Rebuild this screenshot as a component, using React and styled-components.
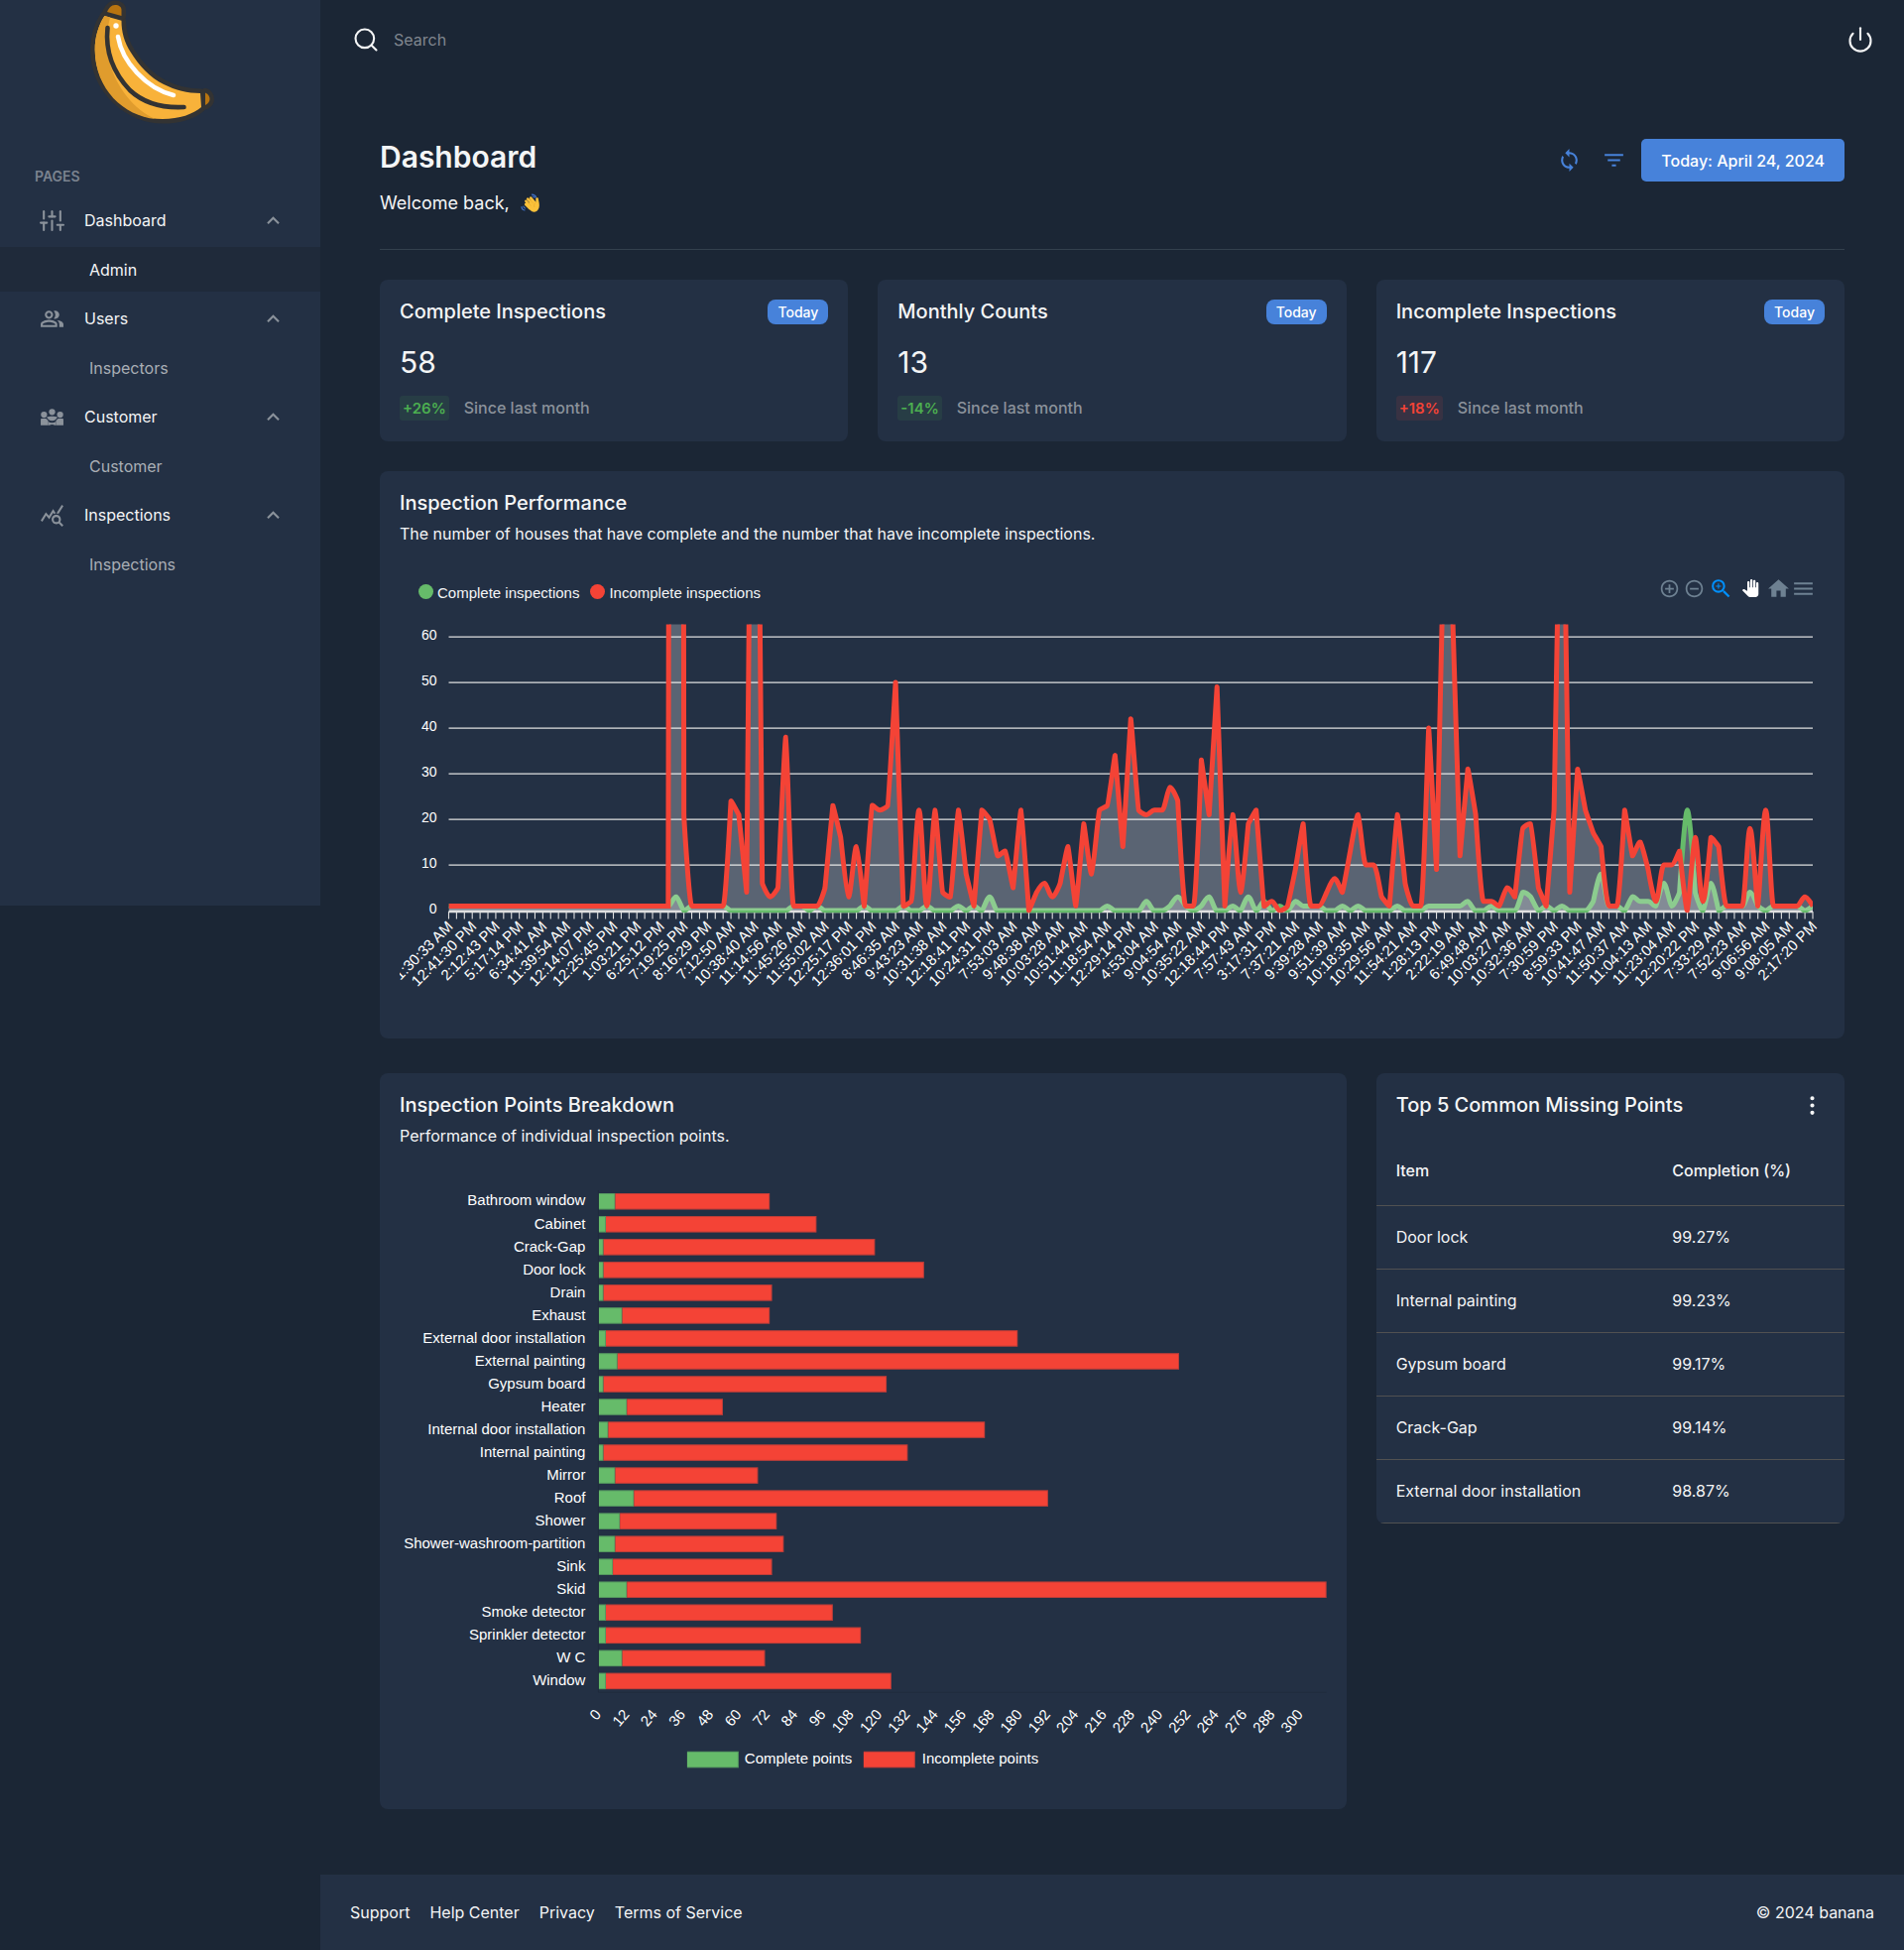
import React from "react";
import styled, { createGlobalStyle, css } from "styled-components";
import { FiSearch, FiPower, FiSliders, FiMoreVertical } from "react-icons/fi";
import {
  MdOutlinePeopleAlt,
  MdQueryStats,
  MdExpandLess,
  MdSync,
  MdFilterList,
  MdAddCircleOutline,
  MdRemoveCircleOutline,
  MdZoomIn,
  MdPanTool,
  MdHome,
  MdMenu,
} from "react-icons/md";

const color = {
  page: "#1b2635",
  paper: "#233044",
  active: "#1f2a3a",
  text: "#f4f5f6",
  muted: "#8b929b",
  blue: "#4782da",
  green: "#66bb6a",
  red: "#f44336",
  line: "#515151",
};

const GlobalStyle = createGlobalStyle`
  *, *::before, *::after { box-sizing: border-box; }
  body {
    margin: 0;
    background: ${color.page};
    color: ${color.text};
    font-family: Inter, "Liberation Sans", sans-serif;
    font-size: 16px;
    line-height: 24px;
  }
  h1, h2, p, ul { margin: 0; padding: 0; }
  ul { list-style: none; }
  button, input { font: inherit; color: inherit; }
  a { color: inherit; text-decoration: none; }
`;

/* ---------- shell ---------- */

const Page = styled.div`
  display: flex;
  align-items: flex-start;
  min-height: 100vh;
`;

const Sidebar = styled.aside`
  flex: 0 0 323px;
  min-height: 913px;
  background: ${color.paper};
`;

const Brand = styled.a`
  display: flex;
  justify-content: center;
  height: 160px;
  padding-right: 15px;
`;

const Section = styled.h2`
  padding: 6px 35px 5px;
  color: #7b838f;
  font-size: 14px;
  font-weight: 600;
`;

const NavToggle = styled.button`
  display: flex;
  align-items: center;
  gap: 20px;
  width: 100%;
  height: 54px;
  padding: 0 35px 0 40px;
  border: 0;
  background: none;
  text-align: left;
  cursor: pointer;

  span {
    flex: 1;
  }
  svg {
    color: ${color.muted};
  }
`;

const NavLink = styled.a`
  display: flex;
  align-items: center;
  height: 45px;
  padding-left: 90px;
  color: #a9aeb5;
  ${(p) =>
    p.$active &&
    css`
      background: ${color.active};
      color: ${color.text};
    `}
`;

const Column = styled.div`
  display: flex;
  flex: 1;
  flex-direction: column;
  min-width: 0;
  min-height: 100vh;
`;

const TopBar = styled.header`
  display: flex;
  align-items: center;
  justify-content: space-between;
  height: 80px;
  padding: 0 30px;
`;

const SearchBox = styled.label`
  display: flex;
  align-items: center;
  gap: 14px;
  padding-left: 2px;

  input {
    width: 200px;
    padding: 0;
    border: 0;
    outline: 0;
    background: none;
  }
  input::placeholder {
    color: #80868f;
    opacity: 1;
  }
`;

const IconButton = styled.button`
  display: inline-flex;
  align-items: center;
  justify-content: center;
  width: ${(p) => p.$width || 45}px;
  height: ${(p) => p.$height || 45}px;
  padding: 0;
  border: 0;
  background: none;
  color: ${(p) => p.$color || color.text};
  cursor: pointer;
`;

const Main = styled.main`
  flex: 1;
  padding: 60px 60px 66px;
`;

const Footer = styled.footer`
  display: flex;
  align-items: center;
  justify-content: space-between;
  height: 76px;
  padding: 0 30px;
  background: ${color.paper};

  ul {
    display: flex;
    gap: 20px;
  }
`;

/* ---------- page heading ---------- */

const Heading = styled.div`
  display: flex;
  align-items: flex-start;
  justify-content: space-between;
  padding-bottom: 34px;
  border-bottom: 1px solid #33404d;
`;

const PageTitle = styled.h1`
  font-size: 30px;
  font-weight: 600;
  line-height: 36px;
`;

const Welcome = styled.p`
  display: flex;
  align-items: center;
  gap: 11px;
  margin-top: 17px;
  font-size: 18px;
`;

const Actions = styled.div`
  display: flex;
  align-items: center;
  height: 43px;
`;

const DateButton = styled.button`
  height: 43px;
  margin-left: 5px;
  padding: 0 20px;
  border: 0;
  border-radius: 5px;
  background: ${color.blue};
  color: #fff;
  font-weight: 500;
  cursor: pointer;
`;

/* ---------- cards ---------- */

const Grid = styled.div`
  display: grid;
  grid-template-columns: repeat(3, minmax(0, 1fr));
  gap: 30px;
  align-items: start;
  margin-top: ${(p) => p.$top}px;
`;

const Card = styled.section`
  padding: ${(p) => p.$padding || "20px"};
  border-radius: 8px;
  background: ${color.paper};
  overflow: hidden;
  grid-column: span ${(p) => p.$span || 1};
`;

const CardHead = styled.div`
  display: flex;
  align-items: flex-start;
  justify-content: space-between;
  height: 25px;
  ${(p) => p.$inset && "padding: 0 20px;"}
`;

const CardTitle = styled.h2`
  font-size: 20px;
  font-weight: 500;
  line-height: 24px;
`;

const CardText = styled.p`
  margin-top: 7px;
`;

const Pill = styled.span`
  padding: 0 10px;
  border-radius: 8px;
  background: ${color.blue};
  color: #fff;
  font-size: 14px;
  font-weight: 500;
  line-height: 25px;
`;

const Value = styled.p`
  margin: 20px 0 16px;
  font-size: 30px;
  line-height: 36px;
`;

const Trend = styled.p`
  display: flex;
  align-items: center;
  gap: 15px;
  color: ${color.muted};
  font-weight: 500;
  line-height: 25px;

  b {
    padding: 0 3px;
    border-radius: 3px;
    font-size: 15px;
    font-weight: 600;
    color: ${(p) => (p.$bad ? color.red : "#4caf50")};
    background: ${(p) => (p.$bad ? "rgba(244,67,54,.1)" : "rgba(76,175,80,.1)")};
  }
`;

/* ---------- charts ---------- */

const ChartBar = styled.div`
  display: flex;
  align-items: flex-start;
  justify-content: space-between;
  height: 31px;
  margin-top: 30px;
  padding: 0 9px 0 19px;
`;

const Legend = styled.ul`
  display: flex;
  gap: 11px;
  font-family: "Liberation Sans", Arial, sans-serif;
  font-size: 15px;

  li {
    display: flex;
    align-items: center;
    gap: 4px;
    padding-top: 6px;
  }
`;

const Dot = styled.i`
  width: 15px;
  height: 15px;
  margin-bottom: 4px;
  border-radius: 50%;
  background: ${(p) => p.$color};
`;

const Tools = styled.div`
  display: flex;
  height: 26px;
`;

const Plot = styled.svg`
  display: block;
  width: 100%;
  height: auto;
  margin-top: ${(p) => p.$top || 0}px;
  font-family: "Liberation Sans", Arial, sans-serif;
  fill: #fff;
`;

/* ---------- table ---------- */

const Table = styled.table`
  width: 100%;
  margin-top: 18px;
  border-collapse: collapse;

  th,
  td {
    height: 64px;
    padding: 0 20px;
    border-bottom: 1px solid ${color.line};
    text-align: left;
    font-weight: 400;
  }
  th {
    height: 70px;
    font-weight: 500;
  }
  th:first-child {
    width: 59%;
  }
`;

/* ---------- drawings ---------- */

const Banana = () => (
  <svg width="126" height="126" viewBox="0 0 126 126" role="img" aria-label="banana">
    <g stroke="#333" strokeWidth="9" strokeLinejoin="round" fill="#333">
      <path d="M14.4 16L31.5 20.7C31.5 32 34 42 41 53C49 66 60 78 74 85C86 91 98 94 111 94L112 108C104 115 90 120 73 120C40 120 4.7 92 4.7 50C4.7 38 8 26 14.4 16Z" />
      <path d="M17 12C19 8 21 5 25 5C29 5 31.5 7 31.5 10V16Z" />
      <path d="M116 93.5C119.500 95 120.500 98 120.500 100C120.500 102 119 104.500 116 106Z" />
    </g>
    <path fill="#f8b23a" d="M14.4 16L31.5 20.7C31.5 32 34 42 41 53C49 66 60 78 74 85C86 91 98 94 111 94L112 108C104 115 90 120 73 120C40 120 4.700 92 4.700 50C4.700 38 8 26 14.400 16Z" />
    <path fill="#e09c2d" d="M14.4 16L20 17.500C15.500 35 16 50 20 64C26 87 44 111 66 120C34 117 4.700 90 4.700 50C4.700 38 8 26 14.400 16Z" />
    <path fill="#b87410" d="M17 12C19 8 21 5 25 5C29 5 31.5 7 31.5 10V16Z" />
    <path fill="#b87410" d="M116 93.500C119.500 95 120.500 98 120.500 100C120.500 102 119 104.500 116 106Z" />
    <g fill="none" strokeLinecap="round" strokeWidth="4.6">
      <path stroke="#333" d="M17.500 28C15 52 23 73 40 91C55 105 75 109 94.500 108" />
      <path stroke="#fff" d="M28 37C32 62 56 89 84 96" />
    </g>
    <circle cx="26" cy="26" r="2.700" fill="#fff" />
  </svg>
);

const Wave = () => (
  <svg width="20" height="20" viewBox="0 0 20 20" role="img" aria-label="waving hand">
    <g fill="none" stroke="#3f6fc4" strokeWidth="1.200" strokeLinecap="round">
      <path d="M11.500 1.200C13.600 1.300 15 2.400 15.600 4M12 3C13 3.100 13.700 3.600 14 4.300" />
      <path d="M1 13.500C1 15.500 2.200 16.700 4 17M2.900 13C3 14 3.500 14.700 4.500 15" />
    </g>
    <g stroke="#fbc13a" strokeLinecap="round" strokeWidth="2.600">
      <path d="M5.200 11L9.500 15.200M5.400 7.800L10 12.600M7.200 5.600L12 10.200M10.200 4.600L14 9" />
      <path d="M16.600 5.600V10" />
    </g>
    <path fill="#fbc13a" d="M7 11L12.500 6.500L15.500 9L17.800 5.500C18.600 9 19.300 12 18.500 14.500C17.500 18 14 19.600 11.500 18.300C9.500 17.300 8 15 7 11Z" />
    <path fill="none" stroke="#e0a528" strokeWidth=".5" d="M6.500 8.500L10.500 12.500M8.500 5.800L12.500 9.800M15 9.500C13.600 11 13.200 12.400 14 14" />
  </svg>
);

const Crowd = () => (
  <svg width="25" height="25" viewBox="0 0 24 24" fill="currentColor" aria-hidden="true">
    <circle cx="4.200" cy="9.700" r="3" />
    <circle cx="12" cy="7" r="3" />
    <circle cx="19.800" cy="9.700" r="3" />
    <path d="M1 20V14.500C1 13.800 1.400 13.500 2 13.500H6.200L8.200 15.400V20Z" />
    <path d="M23 20V14.500C23 13.800 22.600 13.500 22 13.500H17.800L15.800 15.400V20Z" />
    <path d="M6.800 12C8.600 10.900 15.400 10.900 17.200 12C16.300 13.900 14.300 15.700 12 15.700C9.700 15.700 7.700 13.900 6.800 12Z" />
    <path d="M8.200 16.300C10.500 18 13.500 18 15.800 16.300V20H14.600C13 19 11 19 9.400 20H8.200Z" />
  </svg>
);

/* ---------- line chart ---------- */

const run = (value, count) => Array(count).fill(value);

const incomplete = [
  ...run(1, 29), 1500, 21, ...run(1, 5), 24, 21, 4, 163, 6, 3, 5, 38, ...run(1, 4),
  5, 23, 16, 3, 14, 1, 23, 22, 23, 50, 1, 2, 22, 1, 22, 4, 3, 22, 8, 1, 22, 20, 12, 13, 5, 22, 0,
  4, 6, 3, 6, 14, 1, 19, 8, 22, 23, 34, 14, 42, 22, 21, 22, 22, 27, 24, 1, 1, 33, 21, 49, 1, 21, 4,
  19, 22, 1, 2, 0, 1, 9, 19, 1, 1, 4, 7, 4, 13, 21, 10, 10, 3, 1, 21, 6, 1, 1, 40, 9, 86, 68, 12,
  31, 21, 2, 2, 1, 5, 3, 18, 19, 5, 1, 22, 118, 4, 31, 22, 17, 14, 1, 1, 22, 12, 15, 9, 2, 10, 10,
  13, 0, 16, 2, 16, 14, 1, 1, 1, 18, 1, 22, ...run(1, 4), 3, 1,
];

const complete = [
  ...run(1, 29), 3, 0, ...run(1, 5), ...run(0, 8), 1, 1, 0, 1, ...run(0, 5), 1, ...run(0, 4),
  1, 0, 0, 1, 0, 0, 0, 1, 0, 1, 0, 3, ...run(0, 14), 1, ...run(0, 4), 2, 0, 0, 1, 3, 1, 0, 1, 3, 0, 0,
  1, 0, 3, 0, 2, 0, 1, 0, 2, 1, 1, 1, 0, 0, 1, 0, 1, 0, 0, 0, 0, 1, 0, 0, 0, 1, 1, 1, 1, 1, 2, 0,
  0, 1, 0, 0, 0, 4, 3, 0, 1, 0, 1, 0, 0, 0, 2, 8, 1, 1, 0, 3, 2, 2, 1, 6, 1, 4, 22, 4, 0, 6, 0,
  1, 1, 1, 4, 1, 0, ...run(1, 4), 0, 1,
];

const times = `1:30:33 AM,12:41:30 PM,2:12:43 PM,5:17:14 PM,6:34:41 AM,11:39:54 AM,12:14:07 PM,12:25:45 PM,1:03:21 PM,6:25:12 PM,7:19:25 PM,8:16:29 PM,7:12:50 AM,10:38:40 AM,11:14:56 AM,11:45:26 AM,11:55:02 AM,12:25:17 PM,12:36:01 PM,8:46:35 AM,9:43:23 AM,10:31:38 AM,12:18:41 PM,10:24:31 PM,7:53:03 AM,9:48:38 AM,10:03:28 AM,10:51:44 AM,11:18:54 AM,12:29:14 PM,4:53:04 AM,9:04:54 AM,10:35:22 AM,12:18:44 PM,7:57:43 AM,3:17:31 PM,7:37:21 AM,9:39:28 AM,9:51:39 AM,10:18:35 AM,10:29:56 AM,11:54:21 AM,1:28:13 PM,2:22:19 AM,6:49:48 AM,10:03:27 AM,10:32:36 AM,7:30:59 PM,8:59:33 PM,10:41:47 AM,11:50:37 AM,11:04:13 AM,11:23:04 AM,12:20:22 PM,7:33:29 AM,7:52:23 AM,9:06:56 AM,9:08:05 AM,2:17:20 PM`.split(",");

const left = 49.5;
const right = 1425;
const base = 307;
const unit = 4.6;
const step = (right - left) / 174;
const px = (i) => left + i * step;
const py = (v) => base - v * unit;

/* Cubic spline whose handles shrink as the line gets steeper. */
function curve(values) {
  const y = values.map(py);
  const last = y.length - 1;
  const slope = y.slice(1).map((v, i) => (v - y[i]) / step);
  const m = y.map((_, i) => {
    if (i === 0) return slope[0];
    if (i === last) return slope[last - 1];
    return (slope[i - 1] + slope[i]) / 2;
  });
  slope.forEach((d, i) => {
    if (Math.abs(d) < 1e-6) {
      m[i] = 0;
      m[i + 1] = 0;
      return;
    }
    const a = m[i] / d;
    const b = m[i + 1] / d;
    const sum = a * a + b * b;
    if (sum > 9) {
      const k = (d * 3) / Math.sqrt(sum);
      m[i] = k * a;
      m[i + 1] = k * b;
    }
  });
  const handle = m.map((t, i) => {
    const span = (Math.min(last, i + 1) - Math.max(0, i - 1)) * step;
    const s = span / (6 * (1 + t * t));
    return [s, t * s];
  });
  let d = `M${px(0)} ${y[0]}`;
  for (let i = 1; i <= last; i++) {
    const [ax, ay] = handle[i - 1];
    const [bx, by] = handle[i];
    d += `C${px(i - 1) + ax} ${y[i - 1] + ay} ${px(i) - bx} ${y[i] - by} ${px(i)} ${y[i]}`;
  }
  return d;
}

function Series({ values, stroke }) {
  const d = curve(values);
  return (
    <g clipPath="url(#plot-area)">
      <path d={`${d}L${right} ${base}L${left} ${base}Z`} fill="#fff" fillOpacity=".25" />
      <path d={d} fill="none" stroke={stroke} strokeWidth="5" />
    </g>
  );
}

const PerformanceChart = () => (
  <Plot viewBox="0 0 1437 416" role="img" aria-label="Complete and incomplete inspections over time">
    <defs>
      <clipPath id="plot-area">
        <rect x={left} y="18.500" width={right - left} height="291" />
      </clipPath>
    </defs>
    {[60, 50, 40, 30, 20, 10].map((v) => (
      <line key={v} x1={left} x2={right} y1={py(v)} y2={py(v)} stroke="#e0e0e0" strokeWidth="1.25" />
    ))}
    <line x1={left} x2={right} y1="308" y2="308" stroke="#e0e0e0" strokeWidth="2.5" />
    {[60, 50, 40, 30, 20, 10, 0].map((v) => (
      <text key={v} x="37.500" y={py(v) + 2.5} fontSize="14" textAnchor="end">
        {v}
      </text>
    ))}
    {complete.map((_, i) => (
      <line key={i} x1={px(i)} x2={px(i)} y1="308" y2="315.500" stroke="#e0e0e0" strokeWidth="1.100" />
    ))}
    <Series values={complete} stroke={color.green} />
    <Series values={incomplete} stroke={color.red} />
    {times.map((t, i) => (
      <text
        key={i}
        fontSize="15"
        textAnchor="end"
        transform={`translate(${px(i * 3) + 5} ${base + 17}) rotate(-45)`}
      >
        {t}
      </text>
    ))}
  </Plot>
);

/* ---------- stacked bars ---------- */

const points = [
  ["Bathroom window", 7, 73],
  ["Cabinet", 3, 93],
  ["Crack-Gap", 2, 118],
  ["Door lock", 2, 139],
  ["Drain", 2, 74],
  ["Exhaust", 10, 73],
  ["External door installation", 3, 179],
  ["External painting", 8, 248],
  ["Gypsum board", 2, 123],
  ["Heater", 12, 53],
  ["Internal door installation", 4, 165],
  ["Internal painting", 2, 132],
  ["Mirror", 7, 68],
  ["Roof", 15, 192],
  ["Shower", 9, 76],
  ["Shower-washroom-partition", 7, 79],
  ["Sink", 6, 74],
  ["Skid", 12, 311],
  ["Smoke detector", 3, 100],
  ["Sprinkler detector", 3, 112],
  ["W C", 10, 71],
  ["Window", 3, 125],
];

const barStart = 201;
const barUnit = 2.36;

const Bar = ({ x, y, width, height = 16.5, fill }) => (
  <g>
    <rect x={x} y={y} width={width} height={height} fill={fill} />
    <path
      d={`M${x} ${y + 0.5}H${x + width - 0.5}V${y + height - 0.5}H${x}`}
      fill="none"
      stroke="#233044"
      strokeOpacity=".25"
    />
  </g>
);

const BreakdownChart = () => (
  <Plot $top={31} viewBox="0 0 935 616" role="img" aria-label="Complete and incomplete points per item">
    <path d="M200.500 12V518.500H935" fill="none" stroke="#000" strokeOpacity=".1" />
    {points.map(([name, done, total], i) => {
      const y = 15 + i * 23.04;
      return (
        <g key={name}>
          <text x="187.500" y={y + 12.5} fontSize="15" textAnchor="end">
            {name}
          </text>
          <Bar x={barStart} y={y} width={done * barUnit} fill={color.green} />
          <Bar x={barStart + done * barUnit} y={y} width={(total - done) * barUnit} fill={color.red} />
        </g>
      );
    })}
    {Array.from({ length: 26 }, (_, i) => (
      <text
        key={i}
        fontSize="15"
        textAnchor="end"
        transform={`translate(${barStart + i * 12 * barUnit + 3} 541) rotate(-50)`}
      >
        {i * 12}
      </text>
    ))}
    <Bar x={290} y={578} width={52} fill={color.green} />
    <text x="348" y="590" fontSize="15">
      Complete points
    </text>
    <Bar x={468} y={578} width={52} fill={color.red} />
    <text x="527" y="590" fontSize="15">
      Incomplete points
    </text>
  </Plot>
);

/* ---------- page ---------- */

const nav = [
  { name: "Dashboard", icon: <FiSliders size={25} />, link: "Admin", active: true },
  { name: "Users", icon: <MdOutlinePeopleAlt size={25} />, link: "Inspectors" },
  { name: "Customer", icon: <Crowd />, link: "Customer" },
  { name: "Inspections", icon: <MdQueryStats size={25} />, link: "Inspections" },
];

const stats = [
  { title: "Complete Inspections", value: 58, change: "+26%" },
  { title: "Monthly Counts", value: 13, change: "-14%" },
  { title: "Incomplete Inspections", value: 117, change: "+18%", bad: true },
];

const missing = [
  ["Door lock", "99.27%"],
  ["Internal painting", "99.23%"],
  ["Gypsum board", "99.17%"],
  ["Crack-Gap", "99.14%"],
  ["External door installation", "98.87%"],
];

const tools = [
  { name: "Zoom in", icon: <MdAddCircleOutline size={21} />, width: 25 },
  { name: "Zoom out", icon: <MdRemoveCircleOutline size={21} />, width: 25 },
  { name: "Select zoom", icon: <MdZoomIn size={25} />, width: 28, tint: "#008ffb" },
  { name: "Pan", icon: <MdPanTool size={18} />, width: 32, tint: "#fff" },
  { name: "Reset", icon: <MdHome size={25} />, width: 25 },
  { name: "Menu", icon: <MdMenu size={25} />, width: 25 },
];

export default function App() {
  return (
    <>
      <GlobalStyle />
      <Page>
        <Sidebar>
          <Brand href="#">
            <Banana />
          </Brand>
          <Section>PAGES</Section>
          <nav>
            {nav.map((item) => (
              <div key={item.name}>
                <NavToggle type="button" aria-expanded="true">
                  {item.icon}
                  <span>{item.name}</span>
                  <MdExpandLess size={25} />
                </NavToggle>
                <NavLink href="#" $active={item.active}>
                  {item.link}
                </NavLink>
              </div>
            ))}
          </nav>
        </Sidebar>
        <Column>
          <TopBar>
            <SearchBox>
              <FiSearch size={28} strokeWidth={1.8} aria-hidden="true" />
              <input type="text" placeholder="Search" aria-label="Search" />
            </SearchBox>
            <IconButton type="button" aria-label="Sign out" $width={28}>
              <FiPower size={28} strokeWidth={1.8} />
            </IconButton>
          </TopBar>
          <Main>
            <Heading>
              <div>
                <PageTitle>Dashboard</PageTitle>
                <Welcome>
                  Welcome back, <Wave />
                </Welcome>
              </div>
              <Actions>
                <IconButton type="button" aria-label="Refresh" $color={color.blue}>
                  <MdSync size={25} />
                </IconButton>
                <IconButton type="button" aria-label="Filter" $color={color.blue}>
                  <MdFilterList size={25} />
                </IconButton>
                <DateButton type="button">Today: April 24, 2024</DateButton>
              </Actions>
            </Heading>
            <Grid $top={30}>
              {stats.map((s) => (
                <Card key={s.title} $padding="20px 20px 21px">
                  <CardHead>
                    <CardTitle>{s.title}</CardTitle>
                    <Pill>Today</Pill>
                  </CardHead>
                  <Value>{s.value}</Value>
                  <Trend $bad={s.bad}>
                    <b>{s.change}</b>
                    <span>Since last month</span>
                  </Trend>
                </Card>
              ))}
              <Card $span={3}>
                <CardTitle>Inspection Performance</CardTitle>
                <CardText>
                  The number of houses that have complete and the number that have incomplete inspections.
                </CardText>
                <ChartBar>
                  <Legend>
                    <li>
                      <Dot $color={color.green} />
                      Complete inspections
                    </li>
                    <li>
                      <Dot $color={color.red} />
                      Incomplete inspections
                    </li>
                  </Legend>
                  <Tools>
                    {tools.map((t) => (
                      <IconButton
                        key={t.name}
                        type="button"
                        aria-label={t.name}
                        $width={t.width}
                        $height={26}
                        $color={t.tint || "#6e8192"}
                      >
                        {t.icon}
                      </IconButton>
                    ))}
                  </Tools>
                </ChartBar>
                <PerformanceChart />
              </Card>
            </Grid>
            <Grid $top={35}>
              <Card $span={2}>
                <CardTitle>Inspection Points Breakdown</CardTitle>
                <CardText>Performance of individual inspection points.</CardText>
                <BreakdownChart />
              </Card>
              <Card $padding="20px 0 0">
                <CardHead $inset>
                  <CardTitle>Top 5 Common Missing Points</CardTitle>
                  <IconButton type="button" aria-label="More" $width={25} $height={25}>
                    <FiMoreVertical size={25} />
                  </IconButton>
                </CardHead>
                <Table>
                  <thead>
                    <tr>
                      <th scope="col">Item</th>
                      <th scope="col">Completion (%)</th>
                    </tr>
                  </thead>
                  <tbody>
                    {missing.map(([item, rate]) => (
                      <tr key={item}>
                        <td>{item}</td>
                        <td>{rate}</td>
                      </tr>
                    ))}
                  </tbody>
                </Table>
              </Card>
            </Grid>
          </Main>
          <Footer>
            <ul>
              {["Support", "Help Center", "Privacy", "Terms of Service"].map((name) => (
                <li key={name}>
                  <a href="#">{name}</a>
                </li>
              ))}
            </ul>
            <span>© 2024 banana</span>
          </Footer>
        </Column>
      </Page>
    </>
  );
}
